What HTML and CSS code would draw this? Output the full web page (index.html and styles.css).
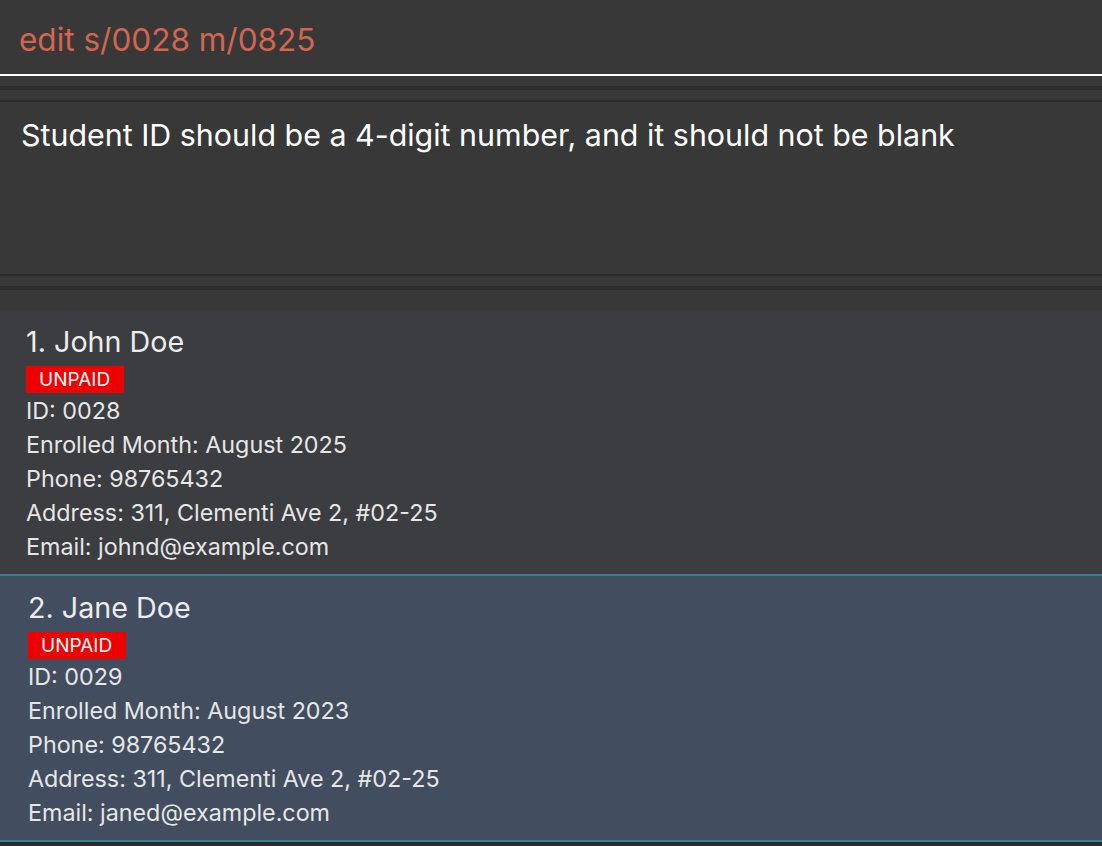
FILE: index.html
```html
<!DOCTYPE html>
<html>
<head>
<meta charset="utf-8">
<link rel="stylesheet" href="styles.css">
</head>
<body>
<div class="app">
  <div class="command">edit s/0028 m/0825</div>
  <div class="gap10"></div>
  <div class="split"></div>
  <div class="gap10"></div>
  <div class="line"></div>
  <div class="result">Student ID should be a 4-digit number, and it should not be blank</div>
  <div class="line"></div>
  <div class="gap10"></div>
  <div class="split"></div>
  <div class="gap20"></div>
  <div class="list">
    <div class="card">
      <div class="name">1. John Doe</div>
      <div class="badges"><span class="badge">UNPAID</span></div>
      <div class="details">
        <div>ID: 0028</div>
        <div>Enrolled Month: August 2025</div>
        <div>Phone: 98765432</div>
        <div>Address: 311, Clementi Ave 2, #02-25</div>
        <div>Email: johnd@example.com</div>
      </div>
    </div>
    <div class="card selected">
      <div class="name">2. Jane Doe</div>
      <div class="badges"><span class="badge">UNPAID</span></div>
      <div class="details">
        <div>ID: 0029</div>
        <div>Enrolled Month: August 2023</div>
        <div>Phone: 98765432</div>
        <div>Address: 311, Clementi Ave 2, #02-25</div>
        <div>Email: janed@example.com</div>
      </div>
    </div>
  </div>
</div>
</body>
</html>
```
FILE: styles.css
```css
* { box-sizing: border-box; }
html, body { margin: 0; padding: 0; }
body {
  background: #2b2b2b;
  font-family: Inter, "Noto Sans", sans-serif;
  width: 1102px;
  height: 846px;
  overflow: hidden;
}
.app {
  display: flex;
  flex-direction: column;
  background: #383838;
}
.command {
  height: 76px;
  padding: 20px 0 0 19px;
  font-size: 31.5px;
  line-height: 40px;
  color: #d4654f;
  border-bottom: 2px solid #ffffff;
}
.gap10 { height: 10px; }
.gap20 { height: 20px; }
.split { height: 4px; background: #2b2b2b; }
.line { height: 2px; background: #2b2b2b; }
.result {
  height: 172px;
  padding: 13px 0 0 21px;
  font-size: 30.4px;
  line-height: 40px;
  color: #ffffff;
}
.list {
  display: flex;
  flex-direction: column;
  background: #2b2b2b;
}
.card {
  height: 264px;
  padding: 12px 0 0 26px;
  background: #3c3d40;
  color: #e6e6e6;
}
.card.selected {
  height: 268px;
  padding-left: 28px;
  padding-top: 12px;
  background: #424d5f;
  border-top: 2px solid #3b7d93;
  border-bottom: 2px solid #3b7d93;
}
.name {
  font-size: 28.7px;
  line-height: 40px;
  color: #ececec;
}
.badges {
  display: flex;
  margin-top: 4px;
  margin-bottom: 1px;
}
.badge {
  background: #ee0000;
  color: #ffffff;
  font-size: 19px;
  line-height: 27px;
  height: 27px;
  padding: 0 14px 0 13px;
}
.details {
  font-size: 23.3px;
  line-height: 34px;
}
```
